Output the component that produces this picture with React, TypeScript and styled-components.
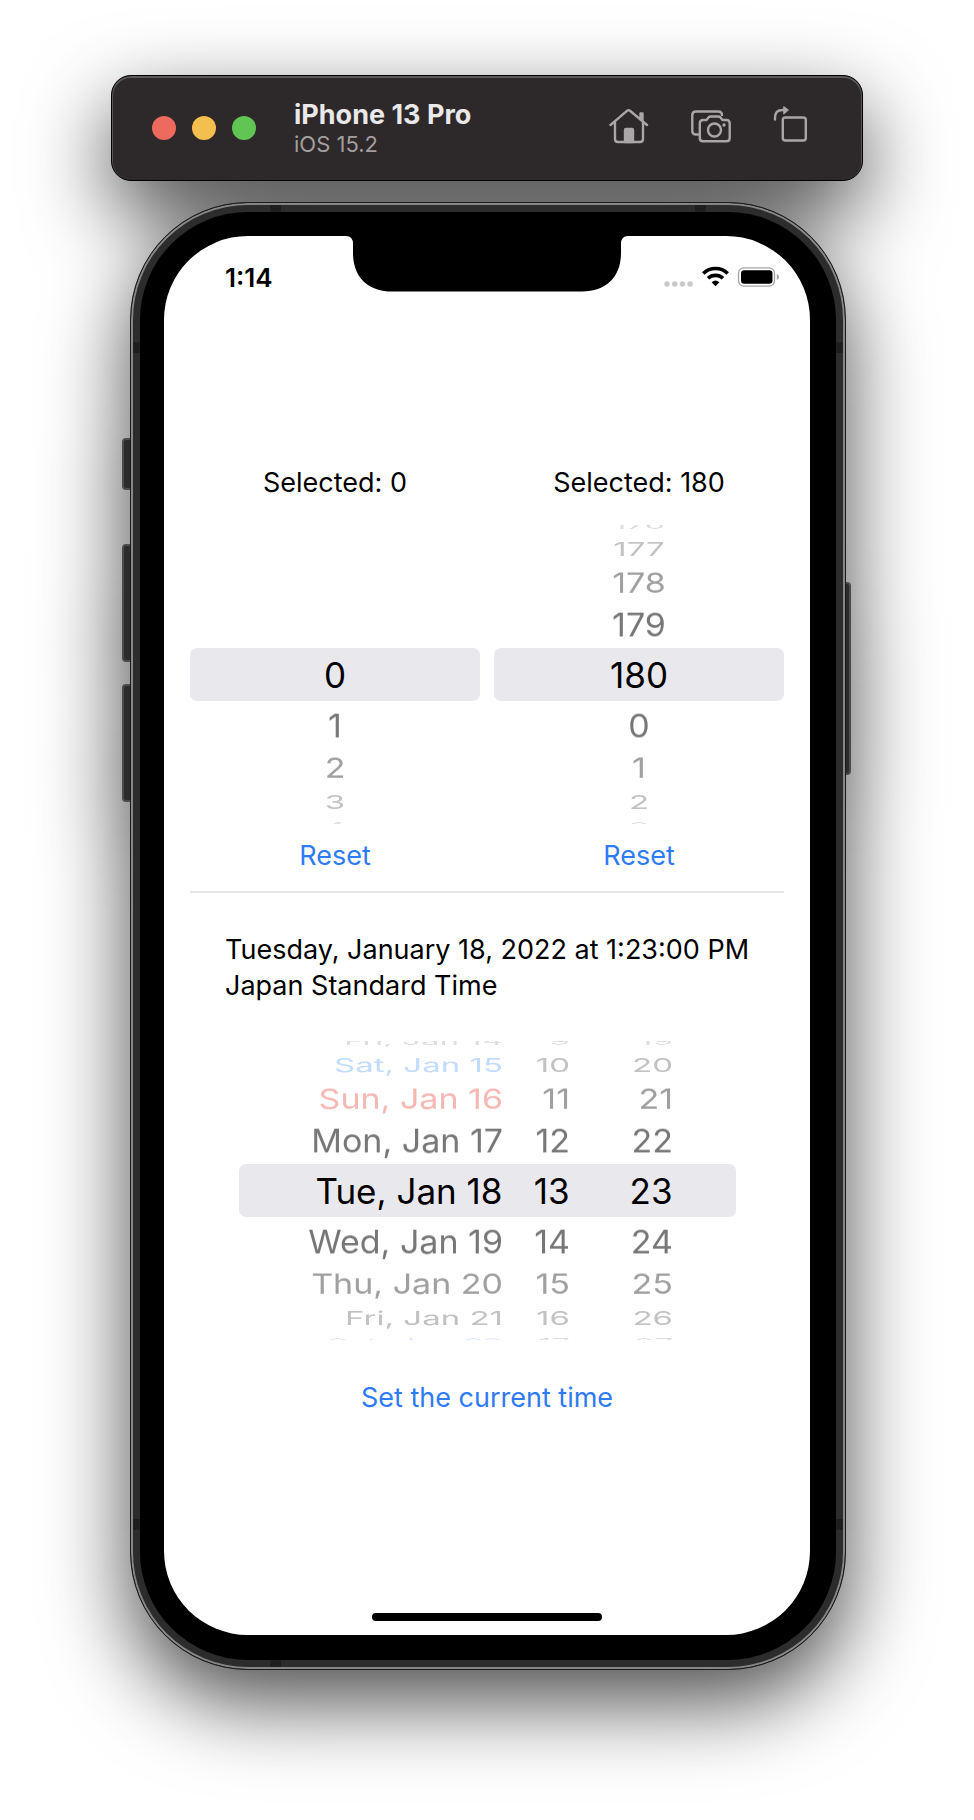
import React from "react";
import styled, { createGlobalStyle } from "styled-components";

const GlobalStyle = createGlobalStyle`
  *, *::before, *::after { box-sizing: border-box; }
  body {
    margin: 0;
    background: #fff;
    color: #000;
    font-family: Inter, "Liberation Sans", sans-serif;
  }
`;

const Stage = styled.main`
  width: 100%;
  max-width: 752px;
  margin: 0 auto;
  padding: 75px 0 149px;
  filter: drop-shadow(0 32px 42px rgba(0, 0, 0, 0.7));
`;

/* ---------- simulator window bar ---------- */

const TitleBar = styled.header`
  display: flex;
  align-items: center;
  height: 106px;
  padding: 0 49px 0 40px;
  border: 1px solid #000;
  border-radius: 20px;
  background: #2d2829;
  box-shadow: inset 0 1px 0 1px #5b5858;
`;

const Lights = styled.div`
  display: flex;
  gap: 16px;
`;

const Light = styled.button<{ $color: string }>`
  width: 24px;
  height: 24px;
  padding: 0;
  border: 0;
  border-radius: 50%;
  background: ${(p) => p.$color};
`;

const Titles = styled.div`
  flex: 1;
  margin-left: 38px;
`;

const DeviceName = styled.h1`
  margin: 0;
  font-size: 27px;
  line-height: 32px;
  font-weight: 700;
  color: #eae8e9;
`;

const OsVersion = styled.p`
  margin: 0;
  font-size: 22px;
  line-height: 26px;
  color: #a39fa0;
`;

const Tools = styled.div`
  display: flex;
  gap: 42px;
  padding-bottom: 4px;
`;

const ToolButton = styled.button`
  display: block;
  width: 40px;
  height: 40px;
  padding: 0;
  border: 0;
  background: none;
  color: #aaa6a7;

  svg { display: block; }
`;

/* ---------- phone body ---------- */

const Phone = styled.section`
  position: relative;
  margin: 21px 17px 0 19px;
  padding: 33px 35px 34px 33px;
  border: 1px solid #1c1c1c;
  border-radius: 118px;
  background: #000;
  box-shadow: inset 0 0 0 2px #858787, inset 0 0 0 9px #2c2c2c;
`;

const SideKey = styled.span<{ $side: "left" | "right"; $top: number; $length: number }>`
  position: absolute;
  z-index: -1;
  top: ${(p) => p.$top}px;
  ${(p) => p.$side}: ${(p) => (p.$side === "left" ? -9 : -6)}px;
  width: 14px;
  height: ${(p) => p.$length}px;
  border: 2px solid #4c4c4c;
  border-radius: 4px;
  background: #2c2c2c;
`;

const Band = styled.span<{ $edge: "top" | "bottom" | "left" | "right"; $from: "top" | "bottom" | "left" | "right" }>`
  position: absolute;
  ${(p) => p.$edge}: 2px;
  ${(p) => p.$from}: 139px;
  width: ${(p) => (p.$edge === "top" || p.$edge === "bottom" ? 11 : 7)}px;
  height: ${(p) => (p.$edge === "top" || p.$edge === "bottom" ? 7 : 11)}px;
  background: #1f1f1f;
`;

const Screen = styled.div`
  position: relative;
  display: flex;
  flex-direction: column;
  padding: 26px 26px 14px;
  border-radius: 84px;
  background: #fff;
`;

const Notch = styled.svg`
  position: absolute;
  top: -1px;
  left: 50%;
  width: 286px;
  height: 57px;
  margin-left: -143px;
`;

const StatusBar = styled.div`
  display: flex;
  justify-content: space-between;
  align-items: center;
  height: 32px;
  padding: 0 5px 0 35px;
`;

const Clock = styled.time`
  font-size: 26px;
  line-height: 32px;
  font-weight: 600;
`;

/* ---------- app content ---------- */

const Pair = styled.div`
  display: grid;
  grid-template-columns: 1fr 1fr;
  gap: 14px;
  margin-top: 172px;
`;

const Column = styled.section`
  display: flex;
  flex-direction: column;
  align-items: center;
`;

const Label = styled.p`
  margin: 0 0 25px;
  font-size: 27px;
  line-height: 34px;
`;

const Wheel = styled.div`
  display: flex;
  flex-direction: column;
  justify-content: center;
  width: 100%;
  height: 299px;
  overflow: hidden;
`;

const DateWheel = styled(Wheel)`
  max-width: 497px;
  margin: 37px auto 41px;
`;

const STEPS = [
  { height: 53, size: 35, color: "#000", tilt: 0 },
  { height: 48, size: 34, color: "#777", tilt: 18 },
  { height: 36, size: 34, color: "#a0a0a0", tilt: 36 },
  { height: 32, size: 33, color: "#c2c2c2", tilt: 54 },
  { height: 16, size: 33, color: "#dedede", tilt: 72 },
];

const WheelRow = styled.div<{ $step: number; $columns: string }>`
  flex: none;
  display: grid;
  grid-template-columns: ${(p) => p.$columns};
  align-items: center;
  height: ${(p) => STEPS[p.$step].height}px;
  padding-top: 2px;
  border-radius: 7px;
  background: ${(p) => (p.$step === 0 ? "#e9e9ed" : "none")};
  color: ${(p) => STEPS[p.$step].color};
  font-size: ${(p) => STEPS[p.$step].size}px;
  line-height: ${(p) => STEPS[p.$step].height - 2}px;
`;

/* Each value lies on the face of a drum, turned away from the viewer. */
const Face = styled.span<{ $turn: number; $align: string; $tint?: string }>`
  text-align: ${(p) => p.$align};
  white-space: nowrap;
  color: ${(p) => p.$tint ?? "inherit"};
  transform: ${(p) => (p.$turn ? `rotateX(${p.$turn}deg)` : "none")};
`;

const LinkButton = styled.button`
  align-self: center;
  padding: 0;
  border: 0;
  background: none;
  color: #2f7bf6;
  font-family: inherit;
  font-size: 27px;
  line-height: 34px;
`;

const ResetButton = styled(LinkButton)`
  margin-top: 15px;
`;

const Divider = styled.hr`
  width: 100%;
  height: 2px;
  margin: 18px 0 39px;
  border: 0;
  background: #e5e5e7;
`;

const FullDate = styled.p`
  margin: 0;
  padding: 0 20px 0 35px;
  font-size: 27px;
  line-height: 36px;
`;

const HomeIndicator = styled.div`
  align-self: center;
  width: 230px;
  height: 8px;
  margin-top: 198px;
  border-radius: 4px;
  background: #000;
`;

type Cell = string | { text: string; tint: string };

function Picker({
  label, rows, columns, align, as: Container = Wheel,
}: {
  label: string; rows: Cell[][]; columns: string; align: string; as?: React.ElementType;
}) {
  return (
    <Container role="listbox" aria-label={label}>
      {rows.map((cells, i) => {
        const step = Math.abs(i - 4);
        const turn = Math.sign(4 - i) * STEPS[step].tilt;
        return (
          <WheelRow key={i} $step={step} $columns={columns} role="option" aria-selected={step === 0}>
            {cells.map((cell, j) => (
              <Face key={j} $turn={turn} $align={align} $tint={typeof cell === "string" ? undefined : cell.tint}>
                {typeof cell === "string" ? cell : cell.text}
              </Face>
            ))}
          </WheelRow>
        );
      })}
    </Container>
  );
}

const leftRows: Cell[][] = [[], [], [], [], ["0"], ["1"], ["2"], ["3"], ["4"]];
const rightRows: Cell[][] = [["176"], ["177"], ["178"], ["179"], ["180"], ["0"], ["1"], ["2"], ["3"]];
const dateRows: Cell[][] = [
  ["Fri, Jan 14", "9", "19"],
  [{ text: "Sat, Jan 15", tint: "#c2dcff" }, "10", "20"],
  [{ text: "Sun, Jan 16", tint: "#f6b8b3" }, "11", "21"],
  ["Mon, Jan 17", "12", "22"],
  ["Tue, Jan 18", "13", "23"],
  ["Wed, Jan 19", "14", "24"],
  ["Thu, Jan 20", "15", "25"],
  ["Fri, Jan 21", "16", "26"],
  [{ text: "Sat, Jan 22", tint: "#dce9ff" }, "17", "27"],
];

const HomeIcon = () => (
  <svg width="40" height="40" viewBox="0 0 40 40" fill="none" stroke="currentColor" strokeWidth="2.400" strokeLinecap="round" strokeLinejoin="round">
    <path d="M1.5 19 L18 4.800 Q19.5 3.600 21 4.800 L38 19" />
    <path d="M6 16.5 V33 Q6 36 9 36 H31 Q34 36 34 33 V16.5" />
    <path d="M31.5 12 V7.5 H33.5 V14" />
    <path d="M16 36 V24 Q16 23 17 23 H23 Q24 23 24 24 V36 Z" fill="currentColor" />
  </svg>
);

const CameraIcon = () => (
  <svg width="40" height="40" viewBox="0 0 40 40" fill="none" stroke="currentColor" strokeWidth="2.400" strokeLinecap="round" strokeLinejoin="round">
    <path d="M7 28.500 H5 Q1.300 28.500 1.300 25 V9 Q1.300 5.500 5 5.500 H27 Q31 5.500 31 9" />
    <path d="M12 14 H15.500 L17.500 11.500 Q18.300 10.500 19.500 10.500 H27.500 Q28.700 10.500 29.500 11.500 L31.500 14 H35.500 Q38.700 14 38.700 17.500 V32 Q38.700 35.300 35.500 35.300 H12 Q8.800 35.300 8.800 32 V17.500 Q8.800 14 12 14 Z" />
    <circle cx="23.500" cy="24" r="6.500" />
    <circle cx="33" cy="19" r="1.700" fill="currentColor" stroke="none" />
  </svg>
);

const RotateIcon = () => (
  <svg width="40" height="40" viewBox="0 0 40 40" fill="none" stroke="currentColor" strokeWidth="2.400" strokeLinecap="round" strokeLinejoin="round">
    <rect x="9.800" y="11.500" width="23" height="23" rx="2.500" />
    <path d="M2 13.500 V12 Q2 4 9.500 4 H11" />
    <path d="M11 .8 L15.500 4 L11 7.800 Z" fill="currentColor" strokeWidth="1" />
  </svg>
);

const StatusIcons = () => (
  <svg width="117" height="24" viewBox="0 0 117 24" role="img" aria-label="Signal, Wi-Fi and battery">
    <g fill="#c9c9cb">
      {[5, 12.700, 20.400, 28.100].map((x) => (
        <circle key={x} cx={x} cy="18" r="2.700" />
      ))}
    </g>
    <g fill="none" stroke="#000" strokeWidth="3.600">
      <path d="M41.300 7.500 A17.500 17.500 0 0 1 65.700 7.500" />
      <path d="M46 12.300 A11 11 0 0 1 61 12.300" />
    </g>
    <path d="M49.600 16.200 A6 6 0 0 1 57.400 16.200 L53.500 20.300 Z" />
    <rect x="76.500" y="1.800" width="36" height="18.400" rx="5.500" fill="none" stroke="#a3a3a3" strokeWidth="1.300" />
    <rect x="79" y="4.200" width="31.500" height="13.600" rx="3.200" />
    <path d="M114.800 8 Q117 8.800 117 11 Q117 13.200 114.800 14 Z" fill="#a3a3a3" />
  </svg>
);

export default function App() {
  return (
    <>
      <GlobalStyle />
      <Stage>
        <TitleBar>
          <Lights>
            <Light $color="#ec6a5e" aria-label="Close" />
            <Light $color="#f4bf4f" aria-label="Minimize" />
            <Light $color="#61c554" aria-label="Zoom" />
          </Lights>
          <Titles>
            <DeviceName>iPhone 13 Pro</DeviceName>
            <OsVersion>iOS 15.2</OsVersion>
          </Titles>
          <Tools>
            <ToolButton aria-label="Home"><HomeIcon /></ToolButton>
            <ToolButton aria-label="Screenshot"><CameraIcon /></ToolButton>
            <ToolButton aria-label="Rotate"><RotateIcon /></ToolButton>
          </Tools>
        </TitleBar>

        <Phone>
          <SideKey $side="left" $top={235} $length={52} />
          <SideKey $side="left" $top={341} $length={118} />
          <SideKey $side="left" $top={481} $length={118} />
          <SideKey $side="right" $top={379} $length={193} />
          <Band $edge="top" $from="left" />
          <Band $edge="top" $from="right" />
          <Band $edge="bottom" $from="left" />
          <Band $edge="left" $from="top" />
          <Band $edge="left" $from="bottom" />
          <Band $edge="right" $from="top" />
          <Band $edge="right" $from="bottom" />

          <Screen>
            <Notch viewBox="0 0 286 57" aria-hidden="true">
              <path d="M0 0 H286 V1 H284 Q277 1 277 9 V18 C277 42 262 56.500 238 56.500 H48 C24 56.500 9 42 9 18 V9 Q9 1 2 1 H0 Z" />
            </Notch>
            <StatusBar>
              <Clock>1:14</Clock>
              <StatusIcons />
            </StatusBar>

            <Pair>
              <Column>
                <Label>Selected: 0</Label>
                <Picker label="First number" rows={leftRows} columns="1fr" align="center" />
                <ResetButton>Reset</ResetButton>
              </Column>
              <Column>
                <Label>Selected: 180</Label>
                <Picker label="Second number" rows={rightRows} columns="1fr" align="center" />
                <ResetButton>Reset</ResetButton>
              </Column>
            </Pair>

            <Divider />

            <FullDate>Tuesday, January 18, 2022 at 1:23:00 PM Japan Standard Time</FullDate>
            <Picker as={DateWheel} label="Date and time" rows={dateRows} columns="264fr 67fr 103fr 63fr" align="right" />
            <LinkButton>Set the current time</LinkButton>
            <HomeIndicator />
          </Screen>
        </Phone>
      </Stage>
    </>
  );
}
